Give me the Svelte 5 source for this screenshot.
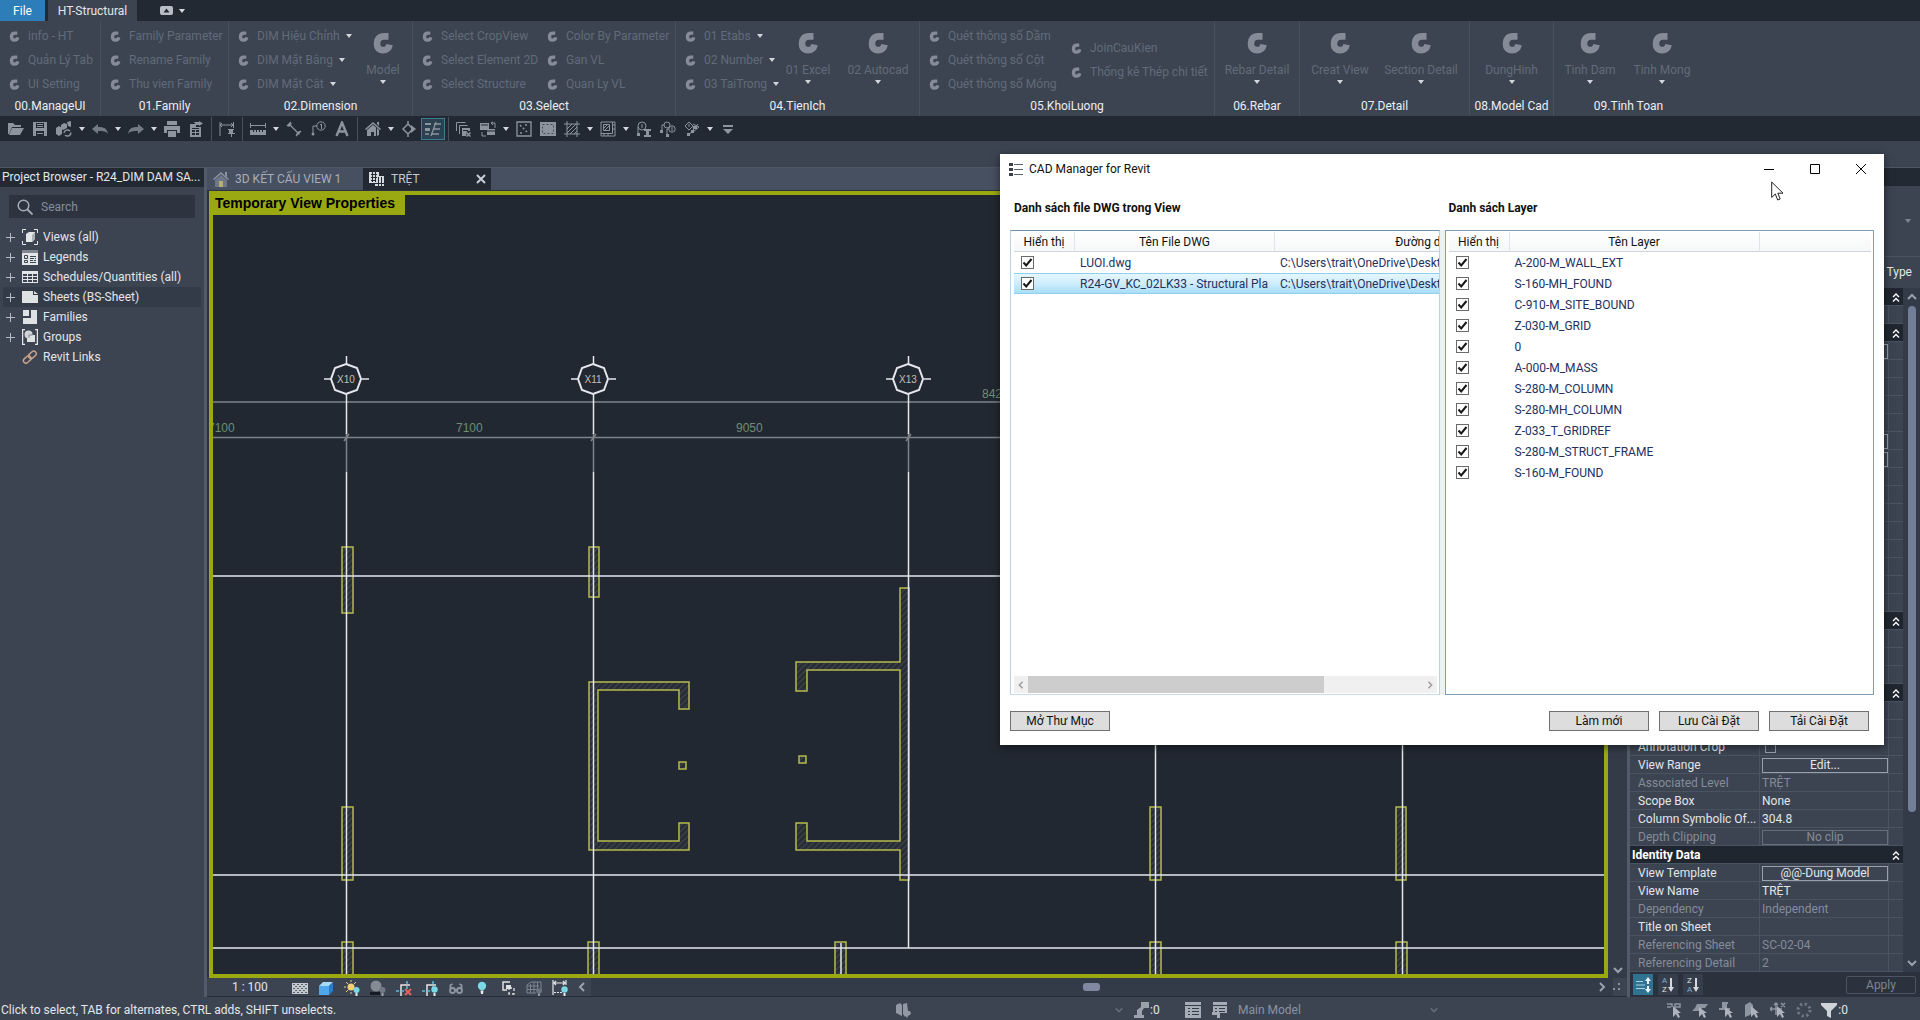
<script lang="ts">
  type Item = { label: string; menu?: boolean };
  type Column = { width: number; items: Item[] };
  type Panel = { title: string; width: number; columns?: Column[]; big?: { label: string; width: number }[] };

  const panels: Panel[] = [
    { title: '00.ManageUI', width: 101, columns: [
      { width: 100, items: [{ label: 'info - HT' }, { label: 'Quản Lý Tab' }, { label: 'UI Setting' }] },
    ] },
    { title: '01.Family', width: 128, columns: [
      { width: 127, items: [{ label: 'Family Parameter' }, { label: 'Rename Family' }, { label: 'Thu vien Family' }] },
    ] },
    { title: '02.Dimension', width: 184, columns: [
      { width: 128, items: [{ label: 'DIM Hiệu Chỉnh', menu: true }, { label: 'DIM Mặt Bằng', menu: true }, { label: 'DIM Mặt Cắt', menu: true }] },
    ], big: [{ label: 'Model', width: 52 }] },
    { title: '03.Select', width: 263, columns: [
      { width: 125, items: [{ label: 'Select CropView' }, { label: 'Select Element 2D' }, { label: 'Select Structure' }] },
      { width: 137, items: [{ label: 'Color By Parameter' }, { label: 'Gan VL' }, { label: 'Quan Ly VL' }] },
    ] },
    { title: '04.TienIch', width: 244, columns: [
      { width: 97, items: [{ label: '01 Etabs', menu: true }, { label: '02 Number', menu: true }, { label: '03 TaiTrong', menu: true }] },
    ], big: [{ label: '01 Excel', width: 70 }, { label: '02 Autocad', width: 70 }] },
    { title: '05.KhoiLuong', width: 295, columns: [
      { width: 142, items: [{ label: 'Quét thông số Dầm' }, { label: 'Quét thông số Cột' }, { label: 'Quét thông số Móng' }] },
      { width: 152, items: [{ label: 'JoinCauKien' }, { label: 'Thống kê Thép chi tiết' }] },
    ] },
    { title: '06.Rebar', width: 85, big: [{ label: 'Rebar Detail', width: 84 }] },
    { title: '07.Detail', width: 170, big: [{ label: 'Creat View', width: 80 }, { label: 'Section Detail', width: 82 }] },
    { title: '08.Model Cad', width: 84, big: [{ label: 'DungHinh', width: 83 }] },
    { title: '09.Tinh Toan', width: 149, big: [{ label: 'Tinh Dam', width: 72 }, { label: 'Tinh Mong', width: 72 }] },
  ];

  // '|' is a separator, 'v' a drop-down arrow, anything else an icon
  const quickTools = [
    'open', 'save', 'sync', 'v', 'undo', 'v', 'redo', 'v', 'print', 'exportDoc', '|', 'alignDim', '|',
    'ruler', 'v', 'measure', 'tag', 'letter', '|', 'home', 'v', 'section', 'thin', '|', 'closeWin',
    'switchWin', 'v', 'dashBox', 'fillBox', 'hatchBox', 'v', 'region', 'v', 'tagI', 'tagMulti', 'tagAll', 'v', 'customize',
  ];

  const icons: Record<string, string> = {
    open: '<path fill="currentColor" d="M0 13V2h5l2 2h6v2H4L1 13zM4 7h12l-4 7H1z"/>',
    save: '<path fill="currentColor" fill-rule="evenodd" d="M1 1h14v14H1zM4 2v5h8V2zM4 10v5h8v-5z"/><path fill="currentColor" d="M5 3h6v1H5zM5 5h6v1H5zM5 12h6v1H5z"/>',
    sync: '<path fill="currentColor" d="M0 7l3-2 3 2v6l-3 2-3-2zM5 4l3-2 3 1v4l-4 2-2-2zM11 1l4-1v6l-3-1z"/><path fill="none" stroke="currentColor" stroke-width="1.500" d="M8 12a3.500 3.500 0 0 1 6-2M15 11.500a3.500 3.500 0 0 1-6 2.500"/>',
    undo: '<path fill="#727a86" d="M0 8l6-5v3c6 0 9 1 10 7-2-3-5-3-10-3v3z"/>',
    redo: '<path fill="#727a86" d="M16 8l-6-5v3C4 6 1 7 0 13c2-3 5-3 10-3v3z"/>',
    print: '<path fill="currentColor" d="M3 0h10v4H3zM0 5h16v7h-3v-3H3v3H0zM4 10h8v6H4z"/>',
    exportDoc: '<path fill="currentColor" fill-rule="evenodd" d="M2 3h6v3h5v10H2zM4 7v1h7V7zM4 9v2h3V9zM8 9v2h3V9zM4 12v2h3v-2zM8 12v2h3v-2z"/><path fill="currentColor" d="M6 1h5V0l4 2.500-4 2.500V4H8z"/>',
    alignDim: '<path fill="none" stroke="currentColor" d="M1 1v14M14.500 1v6M1 4h13M3 2L1 4l2 2M12 2l2 2-2 2"/><path fill="currentColor" d="M9 8h6v1h-1v3h2v1h-3v3h-1v-3H9v-1h1V9H9z"/>',
    ruler: '<path fill="none" stroke="currentColor" d="M.5 2v5M15.500 2v5M1 4.500h14"/><path fill="currentColor" d="M0 9h16v5H0z"/><path stroke="#222933" d="M3.500 9v2M6.500 9v2M9.500 9v2M12.500 9v2"/>',
    measure: '<path fill="none" stroke="currentColor" stroke-width="1.200" d="M1 5l4-4M10 15l5-5M3 3l10 10M3 6V3h3M10 13h3v-3"/>',
    tag: '<circle cx="11" cy="5" r="4.200" fill="none" stroke="currentColor"/><path fill="none" stroke="currentColor" d="M10 4l1.500-1v5M7 5H3v7"/><circle cx="3" cy="13" r="1.500" fill="currentColor"/>',
    letter: '<path fill="none" stroke="currentColor" stroke-width="2.400" d="M2.500 15L8 1.500 13.500 15M4.500 10.500h7"/>',
    home: '<path fill="currentColor" d="M8 1l8 7-1 1-7-6-7 6-1-1zM12 1h2v4l-2-2zM2 9l6-5 3 2.500V15H9v-4H6v4H2zM12 7l2 2v5l-2 1z"/>',
    section: '<path fill="none" stroke="currentColor" stroke-width="1.500" d="M7 3l5 5-5 5-5-5zM7 0v3M7 13v3"/><path fill="currentColor" d="M10 4l5 4-5 4z"/>',
    thin: '<path fill="none" stroke="currentColor" stroke-width="1.300" d="M0 3h6M0 8h5M0 13h4M6 15l5-14M9 3h7M8 8h7M7 13h7"/><path fill="currentColor" d="M0 2h6v2H0zM0 7h5v3H0z"/>',
    closeWin: '<path fill="none" stroke="currentColor" d="M.5 10V1.500h9M3.500 13V4.500h8"/><path fill="currentColor" fill-rule="evenodd" d="M6 7h8v3h-3l-1 5H6zM7 9v1h5V9z"/><path fill="none" stroke="currentColor" stroke-width="1.500" d="M10.500 11.500l4 4M14.500 11.500l-4 4"/>',
    switchWin: '<path fill="currentColor" d="M0 2h9v7H0zM7 8h8v6H7z"/><path stroke="#222933" d="M1 4h7M7 10h8"/><path fill="none" stroke="currentColor" d="M11 2h4v5M2 11v4h4M13 1l-2 1 2 2"/>',
    dashBox: '<path fill="none" stroke="currentColor" stroke-width="1.300" d="M1 1h14v14H1z"/><path stroke="currentColor" stroke-width="1.500" stroke-dasharray="2 2" d="M4 4l8 8M9 4h3M4 12h4"/>',
    fillBox: '<path fill="currentColor" d="M0 1h16v14H0z"/><path fill="none" stroke="#444d5a" stroke-dasharray="2 2" d="M2.500 3.500h11v9h-11z"/>',
    hatchBox: '<path fill="none" stroke="currentColor" d="M3 0v16M13 0v16M0 3h16M0 13h16M3 8l5-5M3 12l9-9M6 13l7-7M10 13l3-3"/>',
    region: '<path fill="none" stroke="currentColor" d="M1 1h14v14H1zM3.500 3.500h6v6h-6zM3 8l5-5M5 9l5-5M1 12.500h11.500V1M4 12v3M8 12v3M12 4h3M12 8h3"/>',
    tagI: '<circle cx="6" cy="5" r="4" fill="none" stroke="currentColor"/><path fill="none" stroke="currentColor" d="M6 3v4M2 6v8"/><path fill="currentColor" d="M8 8h7v2h-2v4h2v2H8v-2h2v-4H8zM1 12h3v3H1z"/>',
    tagMulti: '<circle cx="7" cy="4" r="3" fill="none" stroke="currentColor"/><circle cx="12" cy="8" r="3.200" fill="none" stroke="currentColor"/><path fill="none" stroke="currentColor" d="M4 4H2v7M9 8H7v6M12 6v4"/><path fill="currentColor" d="M0 9h3v3H0zM6 13h3v3H6z"/>',
    tagAll: '<path fill="none" stroke="currentColor" d="M5 1l4 4-4 4-4-4zM5 3v3M9 3l6 3-6 5M14 3L4 15"/><path fill="currentColor" d="M7 9h3v3H7zM3 12h3v3H3zM9 5h4v3H9z"/>',
    customize: '<path fill="currentColor" d="M3 4h10v2H3zM3 8h10l-5 5z"/>',
    views: '<path fill="none" stroke="#e3e6e6" d="M4 .5H.5V4M12 .5h3.500V4M4 15.500H.5V12M12 15.500h3.500V12"/><path fill="#e3e6e6" d="M4 5l3-2h6v7l-3 3H4z"/><path fill="#aab1b8" d="M10 6l3-3v7l-3 3z"/>',
    legends: '<path fill="#e3e6e6" d="M0 4h16v12H0z"/><path fill="#7f868f" d="M0 1h16v3H0z"/><path fill="none" stroke="#3c4452" d="M2.500 6.500h3v3h-3zM2.500 11.500h3v2h-3zM8 7.500h6M8 9.500h4M13 9.500h1M8 11.500h3M12 11.500h2M8 13.500h6"/>',
    schedules: '<path fill="#e3e6e6" d="M0 2h16v12H0z"/><path fill="#3c4452" d="M1 5h4v2H1zM6 5h4v2H6zM11 5h4v2h-4zM1 8h4v2H1zM6 8h4v2H6zM11 8h4v2h-4zM1 11h4v2H1zM6 11h4v2H6zM11 11h4v2h-4z"/>',
    sheets: '<path fill="#dfe2e2" d="M0 2h11v4h5v8H0z"/><path fill="#dfe2e2" d="M12 2l4 3h-4z"/>',
    families: '<path fill="#dfe2e2" d="M1 1h6v6H1zM9 1h6v14H1V9h8z"/>',
    groups: '<path fill="none" stroke="#e3e6e6" stroke-width="1.300" d="M3 .6H.6v14.800H3M13 .6h2.400v14.800H13"/><circle cx="6.500" cy="5.500" r="4" fill="#cfd4d8"/><path fill="#dfe2e2" d="M7 6h6v7H5V9.500z"/><path fill="none" stroke="#7f868f" d="M7 6h3.500M7 6v3"/>',
    links: '<g fill="none" stroke="#c9a48c" stroke-width="1.500" transform="rotate(-42 8 8)"><rect x="0" y="5.500" width="8.500" height="5" rx="2.500"/><rect x="7" y="5.500" width="8.500" height="5" rx="2.500"/></g>',
    house3d: '<path fill="#8b93a0" d="M8 1l8 7-1 1-7-6-7 6-1-1zM12 1h2v5l-2-2z"/><path fill="#6c7788" d="M2 9l6-5 6 5v7H2z"/><path fill="#b9ae71" d="M6 10h4v6H6z"/>',
    plan: '<path fill="#d5dade" d="M0 1h10v4h5v10H6v-3H0z"/><path stroke="#222933" d="M2 3.500h6M2 6.500h6M2 9.500h4M3.500 1v10M6.500 1v10M9.500 6v9M12.500 6v9M6 12.500h9"/>',
    grain: '<path fill="#c5cad0" d="M0 3h16v11H0z"/><path stroke="#59616d" stroke-dasharray="2 2" d="M1 4.500h14M1 8.500h14M1 12.500h14"/><path stroke="#59616d" stroke-dasharray="2 2" d="M3 6.500h12M3 10.500h12"/>',
    cube: '<path fill="#a9d9fa" d="M1 6l4-4h10l-4 4z"/><path fill="#4fa6ea" d="M1 6h10v9H1z"/><path fill="#2b7cc4" d="M11 6l4-4v9l-4 4z"/>',
    sun: '<circle cx="7" cy="7" r="3.500" fill="#f3cf7a"/><path stroke="#f3cf7a" d="M7 0v2M7 12v2M0 7h2M2 2l2 2M10 4l2-2M2 12l2-2"/><circle cx="12.500" cy="10" r="3" fill="#79d8e4"/><path fill="#e8ecef" d="M11.500 13h2v3h-2z"/>',
    shadow: '<circle cx="6" cy="6" r="5.500" fill="#858b94"/><path fill="#171c24" d="M0 12h10v3H0z"/><circle cx="12.500" cy="10" r="3" fill="#717985"/><path fill="#a0a6ae" d="M11.500 13h2v3h-2z"/>',
    cropOff: '<path fill="none" stroke="#e3e6e6" stroke-width="1.500" d="M5 16V5h9"/><path fill="none" stroke="#5bb9dd" stroke-width="1.500" stroke-dasharray="3 2" d="M0 11h11M11 1v9"/><path stroke="#e3605e" stroke-width="2" d="M9 9l6 6M15 9l-6 6"/>',
    cropOn: '<path fill="none" stroke="#e3e6e6" stroke-width="1.500" d="M5 16V5h9"/><path fill="none" stroke="#5bb9dd" stroke-width="1.500" stroke-dasharray="3 2" d="M0 11h11M11 1v9"/><circle cx="12.500" cy="9.500" r="3.200" fill="#79d8e4"/><path fill="#e8ecef" d="M11.500 13h2v3h-2z"/>',
    glasses: '<g fill="none" stroke="#8e96a2" stroke-width="1.800"><circle cx="4.500" cy="10.500" r="2.500"/><circle cx="11.500" cy="10.500" r="2.500"/><path d="M2.500 9V5l2-1M13.500 9V5l-2-1M7 10h2"/></g>',
    bulb: '<circle cx="8" cy="6" r="4.200" fill="#79d8e4"/><path fill="#e8ecef" d="M6.500 10.500h3L9 14H7z"/>',
    reveal: '<path fill="none" stroke="#dfe2e2" stroke-width="1.500" d="M10 2H3v8h4"/><path fill="#dfe2e2" d="M6 5h5v4H6z"/><path fill="none" stroke="#dfe2e2" stroke-width="1.300" stroke-dasharray="3 2" d="M9 8h5v6H9z"/>',
    mesh: '<path fill="none" stroke="#7d8591" d="M1 13V5l4-3h10v10M1 6h12M1 9.500h12M1 13h9M4.500 4v9M8 2v11M11.500 2v8"/><circle cx="13" cy="11" r="2.800" fill="#6b7481"/><path fill="#959ca6" d="M12 13.500h2V16h-2z"/>',
    constraint: '<path fill="none" stroke="#e3e6e6" stroke-width="1.200" d="M1 0v15M14 0v5M2 3h11M4 1L2 3l2 2M11 1l2 2-2 2"/><path stroke="#e3e6e6" stroke-dasharray="2 1" d="M2 12.500h8"/><circle cx="12.500" cy="9.500" r="3.200" fill="#79d8e4"/><path fill="#e8ecef" d="M11.500 13h2v3h-2z"/>',
    workset: '<path fill="#9299a4" d="M1 3l4-2 2 2v11l-4-2-2-1zM8 2l4-1 1 8-3 6-2-3zM10 9h5l1 3-3 2-1 2-2-3z"/>',
    lamp: '<path fill="#9aa1ab" d="M8 0h8v6h-5l-2 3v4h2v3H1v-3h3V8l4-3z"/>',
    list: '<path fill="#a5acb5" d="M0 0h16v16H0z"/><path stroke="#343c48" d="M0 3.500h16M3 6.500h2M7 6.500h7M3 9.500h2M7 9.500h7M3 12.500h2M7 12.500h7"/>',
    listArrow: '<path fill="#a5acb5" d="M2 0h14v11H9v5H6v-3H1v-3h1z"/><path stroke="#343c48" d="M2 3.500h14M4 6.500h2M8 6.500h6M4 9.500h2M8 9.500h6"/>',
    selLink: '<path fill="none" stroke="#8d95a1" stroke-width="1.500" d="M1 5h4M1 2h5v3M9 2h5v3H9z"/><path fill="#aeb4bd" d="M7 4v11l3-3 2 4 2-1-2-4h3z"/>',
    selUnder: '<path fill="#8d95a1" d="M5 2h11l-3 4H3zM3 6h7l-2 3H0z"/><path fill="#aeb4bd" d="M7 5v10l3-3 2 4 2-1-2-4h3z"/>',
    selPin: '<path fill="#8d95a1" d="M4 0h6v2H9v4h3v2H1V6h3V2z"/><path fill="#aeb4bd" d="M7 5v10l3-3 2 4 2-1-2-4h3z"/>',
    selFace: '<path fill="#8d95a1" d="M1 3l5-3v13l-5 2zM6 0l3 3v5l-3 5z"/><path fill="#aeb4bd" d="M7 4v11l3-3 2 4 2-1-2-4h3z"/>',
    drag: '<path fill="none" stroke="#8d95a1" stroke-width="1.500" d="M6 1v12M0 7h12M2 5L0 7l2 2M4 3l2-2 2 2M11 1l4 4M15 1l-4 4"/><path fill="#aeb4bd" d="M7 4v11l3-3 2 4 2-1-2-4h3z"/>',
    spin: '<circle cx="8" cy="8" r="6" fill="none" stroke="#6f7784" stroke-width="3" stroke-dasharray="2.200 2.500"/>',
    filter: '<path fill="#cfd3d8" d="M0 1h16v2l-6 6v7l-4-2V9L0 3z"/>',
  };

  const tree = [
    { icon: 'views', label: 'Views (all)', plus: true },
    { icon: 'legends', label: 'Legends', plus: true },
    { icon: 'schedules', label: 'Schedules/Quantities (all)', plus: true },
    { icon: 'sheets', label: 'Sheets (BS-Sheet)', plus: true },
    { icon: 'families', label: 'Families', plus: true },
    { icon: 'groups', label: 'Groups', plus: true },
    { icon: 'links', label: 'Revit Links', plus: false },
  ];
  let picked = $state('Sheets (BS-Sheet)');

  const viewTools = ['grain', 'cube', 'sun', 'shadow', 'cropOff', 'cropOn', 'glasses', 'bulb', 'reveal', 'mesh', 'constraint'];
  const selectTools = ['selLink', 'selUnder', 'selPin', 'selFace', 'drag', 'spin'];

  let files = $state([
    { on: true, name: 'LUOI.dwg', path: 'C:\\Users\\trait\\OneDrive\\Desktop' },
    { on: true, name: 'R24-GV_KC_02LK33 - Structural Plan', path: 'C:\\Users\\trait\\OneDrive\\Desktop' },
  ]);
  let current = $state(1);

  let layers = $state(
    ['A-200-M_WALL_EXT', 'S-160-MH_FOUND', 'C-910-M_SITE_BOUND', 'Z-030-M_GRID', '0', 'A-000-M_MASS',
      'S-280-M_COLUMN', 'S-280-MH_COLUMN', 'Z-033_T_GRIDREF', 'S-280-M_STRUCT_FRAME', 'S-160-M_FOUND']
      .map((name) => ({ name, on: true }))
  );

  type Prop = { head?: boolean; name?: string; value?: string; kind?: 'button' | 'check'; off?: boolean };
  const blank = (n: number): Prop[] => Array.from({ length: n }, () => ({}));
  const props: Prop[] = [
    { head: true }, ...blank(1),
    { head: true }, { kind: 'button' }, ...blank(4), { kind: 'button' }, { kind: 'button' }, ...blank(8),
    { head: true }, ...blank(3),
    { head: true }, ...blank(2),
    { name: 'Annotation Crop', kind: 'check' },
    { name: 'View Range', value: 'Edit...', kind: 'button' },
    { name: 'Associated Level', value: 'TRỆT', off: true },
    { name: 'Scope Box', value: 'None' },
    { name: 'Column Symbolic Of...', value: '304.8' },
    { name: 'Depth Clipping', value: 'No clip', kind: 'button', off: true },
    { head: true, name: 'Identity Data' },
    { name: 'View Template', value: '@@-Dung Model', kind: 'button' },
    { name: 'View Name', value: 'TRỆT' },
    { name: 'Dependency', value: 'Independent', off: true },
    { name: 'Title on Sheet', value: '' },
    { name: 'Referencing Sheet', value: 'SC-02-04', off: true },
    { name: 'Referencing Detail', value: '2', off: true },
  ];

  const bubbles = [{ x: 346, t: 'X10' }, { x: 593, t: 'X11' }, { x: 908, t: 'X13' }];
  const columns = [
    [342, 547, 11, 66], [589, 547, 10, 50], [342, 807, 11, 73], [1150, 807, 11, 73], [1396, 807, 10, 73],
    [342, 942, 11, 40], [588, 942, 11, 40], [835, 942, 11, 40], [1150, 942, 11, 40], [1396, 942, 11, 40],
  ];
</script>

{#snippet icon(name: string)}
  <svg class="icon" width="16" height="16" viewBox="0 0 16 16" aria-hidden="true">{@html icons[name]}</svg>
{/snippet}

{#snippet logo(size: number)}
  <svg class="logo" width={size} height={size} viewBox="0 0 20 20" aria-hidden="true">
    <path fill="none" stroke="currentColor" stroke-width="6" d="M15 4h-4C6.500 4 4.500 6.500 4.500 10.500 4.500 14.500 6.500 16.500 10 16.500c4 0 5.500-2.500 6-5" />
  </svg>
{/snippet}

{#snippet collapse()}
  <svg class="collapse" width="8" height="10" viewBox="0 0 8 10" aria-hidden="true">
    <path fill="none" stroke="#fff" stroke-width="1.400" d="M1 4l3-3 3 3M1 8.500l3-3 3 3" />
  </svg>
{/snippet}

{#snippet chevron(dir: string)}
  <svg class="chev {dir}" width="10" height="10" viewBox="0 0 10 10" aria-hidden="true">
    <path fill="none" stroke="currentColor" stroke-width="2" d="M1 3l4 4 4-4" />
  </svg>
{/snippet}

<div class="app">
  <nav class="tabs">
    <button class="tab-file">File</button>
    <button class="tab-ribbon">HT-Structural</button>
    <button class="tab-toggle" aria-label="Ribbon display">
      <svg width="13" height="9" viewBox="0 0 13 9"><rect width="13" height="9" rx="2" fill="#b9bec6" /><path fill="#222933" d="M3.500 6.500l3-4 3 4z" /></svg>
      <span class="caret"></span>
    </button>
  </nav>

  <div class="ribbon">
    {#each panels as p}
      <section class="panel" style="width: {p.width}px">
        <div class="panel-body">
          {#each p.columns ?? [] as col}
            <div class="panel-col" style="width: {col.width}px">
              {#each col.items as it}
                <button class="small">
                  {@render logo(11)}<span>{it.label}</span>
                  {#if it.menu}<span class="caret"></span>{/if}
                </button>
              {/each}
            </div>
          {/each}
          {#each p.big ?? [] as b}
            <button class="big" style="width: {b.width}px">
              {@render logo(22)}<span>{b.label}</span><span class="caret"></span>
            </button>
          {/each}
        </div>
        <div class="panel-title">{p.title}</div>
      </section>
    {/each}
  </div>

  <div class="quick">
    {#each quickTools as t}
      {#if t === '|'}
        <span class="quick-sep"></span>
      {:else if t === 'v'}
        <button class="quick-menu" aria-label="More"><span class="caret"></span></button>
      {:else}
        <button class="quick-btn" class:on={t === 'thin'} aria-label={t}>{@render icon(t)}</button>
      {/if}
    {/each}
  </div>

  <div class="options"></div>

  <div class="main">
    <aside class="browser">
      <h2 class="browser-head">Project Browser - R24_DIM DAM SA...</h2>
      <div class="search">
        <svg width="16" height="16" viewBox="0 0 16 16" aria-hidden="true"><circle cx="6.500" cy="6.500" r="5.300" fill="none" stroke="#a6adb8" stroke-width="1.500" /><path stroke="#a6adb8" stroke-width="1.800" d="M10.500 10.500l5 5" /></svg>
        <input type="text" placeholder="Search" aria-label="Search" />
      </div>
      <ul class="tree">
        {#each tree as n}
          <li>
            <button class="node" class:picked={picked === n.label} onclick={() => (picked = n.label)}>
              <span class="plus" class:shown={n.plus}></span>
              {@render icon(n.icon)}
              <span>{n.label}</span>
            </button>
          </li>
        {/each}
      </ul>
    </aside>

    <div class="center">
      <div class="view-tabs">
        <button class="view-tab">{@render icon('house3d')}<span>3D KẾT CẤU VIEW 1</span></button>
        <button class="view-tab active">
          {@render icon('plan')}<span>TRỆT</span>
          <svg class="x" width="10" height="10" viewBox="0 0 10 10"><path stroke="#c9ced6" stroke-width="2" d="M1 1l8 8M9 1L1 9" /></svg>
        </button>
      </div>
      <div class="view-row">
        <div class="view">
          <div class="temp-label">Temporary View Properties</div>
          <svg class="drawing" width="100%" height="100%">
            <defs>
              <pattern id="hatch" width="6" height="6" patternUnits="userSpaceOnUse">
                <rect width="6" height="6" fill="#272c35" />
                <path stroke="#3a4048" stroke-width="1.500" d="M-1 7L7-1M-1 1l2-2M5 7l2-2" />
              </pattern>
            </defs>
            <g transform="translate(-213 -195)">
              <g fill="url(#hatch)" stroke="#b5ba4c" stroke-width="1.500">
                {#each columns as [x, y, w, h]}<rect {x} {y} width={w} height={h} />{/each}
                <path d="M589 682H689V709H679V690H598V841H679V823H689V850H589Z" />
                <path d="M900 588H909V880H900V850H796V823H807V841H900V670H807V691H796V662H900Z" />
                <rect x="679" y="762" width="7" height="7" />
                <rect x="799" y="756" width="7" height="7" />
              </g>
              <g fill="none" stroke="#7c828c" stroke-width="1.500">
                <path d="M213 402H1604M213 437.500H1604" />
                {#each bubbles as b}<path d="M{b.x + 0.5} 433V472M{b.x - 2} 441l5-7" />{/each}
              </g>
              <g fill="none" stroke="#e4e6ee" stroke-width="1.500">
                <path d="M213 576H1604M213 875H1604M213 948H1604" />
                <path d="M346.500 472V975M593.500 472V975M908.500 472V948M1155.500 437V975M1402.500 437V975M841 943V975" />
                {#each bubbles as b}
                  <path d="M{b.x + 0.5} 356v8M{b.x + 0.5} 394V434M{b.x - 22} 379h7M{b.x + 16} 379h7" />
                  <path stroke-width="2" d="M{b.x} 364l11 4 4 11-4 11-11 4-11-4-4-11 4-11z" />
                {/each}
              </g>
              {#each bubbles as b}<text class="grid-no" x={b.x} y="383" text-anchor="middle">{b.t}</text>{/each}
              <g class="dims">
                <text x="208" y="432">7100</text>
                <text x="456" y="432">7100</text>
                <text x="736" y="432">9050</text>
                <text x="982" y="398">8425</text>
              </g>
            </g>
          </svg>
        </div>
        <div class="view-vscroll">{@render chevron('down')}</div>
      </div>
      <div class="view-bar">
        <button class="scale">1 : 100</button>
        {#each viewTools as t}
          <button class="view-tool" aria-label={t}>{@render icon(t)}</button>
        {/each}
        <span class="view-more">{@render chevron('left')}</span>
        <div class="view-hscroll"><span class="hthumb"></span></div>
        <span class="view-end">{@render chevron('right')}</span>
        <svg class="grip" width="8" height="8" viewBox="0 0 8 8"><path fill="#8a92a0" d="M5 0h2v2H5zM5 5h2v2H5zM0 5h2v2H0z" /></svg>
      </div>
    </div>

    <aside class="props">
      <div class="props-head"></div>
      <div class="props-type"><span class="caret"></span></div>
      <button class="edit-type">Edit Type</button>
      <div class="props-scroll">
        <table class="props-table">
          <colgroup><col class="c-name" /><col class="c-val" /><col class="c-end" /></colgroup>
          <tbody>
            {#each props as p}
              {#if p.head}
                <tr class="head"><th>{p.name ?? ''}</th><td></td><td>{@render collapse()}</td></tr>
              {:else}
                <tr class:off={p.off}>
                  <td class="name">{p.name ?? ''}</td>
                  <td class="val">
                    {#if p.kind === 'button'}
                      <button disabled={p.off}>{p.value ?? ''}</button>
                    {:else if p.kind === 'check'}
                      <input type="checkbox" aria-label={p.name} />
                    {:else}
                      {p.value ?? ''}
                    {/if}
                  </td>
                  <td></td>
                </tr>
              {/if}
            {/each}
          </tbody>
        </table>
        <div class="props-vscroll">{@render chevron('up')}<span class="vthumb"></span>{@render chevron('down')}</div>
      </div>
      <div class="props-foot">
        <button class="sort on" aria-label="Group">
          <svg width="16" height="16" viewBox="0 0 16 16"><path stroke="#a9d5e6" d="M1 4.500h7M1 8h9M1 11.500h9" /><path fill="#e6f3f8" d="M13 0l3 4h-2v3h-2V4h-2zM13 16l-3-4h2V9h2v3h2z" /></svg>
        </button>
        <button class="sort" aria-label="A to Z"><span class="az"><i>A</i><b>Z</b></span><svg width="7" height="14" viewBox="0 0 7 14"><path fill="#d5d9df" d="M3 0h2v9h2l-3 5-3-5h2z" /></svg></button>
        <button class="sort" aria-label="Z to A"><span class="az"><b>Z</b><i>A</i></span><svg width="7" height="14" viewBox="0 0 7 14"><path fill="#d5d9df" d="M3 0h2v9h2l-3 5-3-5h2z" /></svg></button>
        <button class="apply" disabled>Apply</button>
      </div>
    </aside>
  </div>

  <footer class="status">
    <span class="hint">Click to select, TAB for alternates, CTRL adds, SHIFT unselects.</span>
    {@render icon('workset')}
    <span class="combo">{@render chevron('down')}</span>
    {@render icon('lamp')}<span class="count">:0</span>
    <span class="pair">{@render icon('list')}{@render icon('listArrow')}</span>
    <label class="model">
      <select aria-label="Design option"><option>Main Model</option></select>
      {@render chevron('down')}
    </label>
    <span class="sel-tools">
      {#each selectTools as t}
        <button aria-label={t}>{@render icon(t)}</button>
      {/each}
    </span>
    {@render icon('filter')}<span class="count last">:0</span>
  </footer>

  <div class="dialog" role="dialog" aria-label="CAD Manager for Revit">
    <header class="dlg-title">
      <svg width="14" height="13" viewBox="0 0 14 13" aria-hidden="true"><path fill="#3a3f4a" d="M0 0h4v3H0zM0 5h4v3H0zM0 10h4v3H0z" /><path stroke="#5a606c" stroke-width="1.200" d="M5 1.500h9M5 6.500h9M5 11.500h9" /></svg>
      <span>CAD Manager for Revit</span>
      <span class="win-btns">
        <button aria-label="Minimize"><svg width="10" height="10"><path stroke="#000" d="M0 5.500h10" /></svg></button>
        <button aria-label="Maximize"><svg width="10" height="10"><path fill="none" stroke="#000" d="M.5.5h9v9h-9z" /></svg></button>
        <button aria-label="Close"><svg width="10" height="10"><path stroke="#000" d="M0 0l10 10M10 0L0 10" /></svg></button>
      </span>
    </header>
    <div class="dlg-body">
      <div class="pane">
        <h3>Danh sách file DWG trong View</h3>
        <div class="list files">
          <table>
            <colgroup><col class="w-on" /><col class="w-file" /><col class="w-path" /></colgroup>
            <thead><tr><th>Hiển thị</th><th>Tên File DWG</th><th>Đường dẫn</th></tr></thead>
            <tbody>
              {#each files as f, i}
                <tr class:current={current === i} onclick={() => (current = i)}>
                  <td><input type="checkbox" bind:checked={f.on} aria-label={f.name} /></td>
                  <td><span class="clip">{f.name}</span></td>
                  <td>{f.path}</td>
                </tr>
              {/each}
            </tbody>
          </table>
          <div class="hbar">{@render chevron('left')}<span class="track"><span class="thumb"></span></span>{@render chevron('right')}</div>
        </div>
      </div>
      <div class="splitter"></div>
      <div class="pane">
        <h3>Danh sách Layer</h3>
        <div class="list layers">
          <table>
            <colgroup><col class="w-on" /><col class="w-layer" /><col /></colgroup>
            <thead><tr><th>Hiển thị</th><th>Tên Layer</th><th></th></tr></thead>
            <tbody>
              {#each layers as l}
                <tr>
                  <td><input type="checkbox" bind:checked={l.on} aria-label={l.name} /></td>
                  <td>{l.name}</td>
                  <td></td>
                </tr>
              {/each}
            </tbody>
          </table>
        </div>
      </div>
    </div>
    <div class="dlg-foot">
      <button>Mở Thư Mục</button>
      <span class="grow"></span>
      <button>Làm mới</button>
      <button>Lưu Cài Đặt</button>
      <button>Tải Cài Đặt</button>
    </div>
    <svg class="pointer" width="13" height="20" viewBox="0 0 13 20" aria-hidden="true">
      <path fill="#fff" stroke="#222" d="M.7 1v15.500l3.600-3.500 2.400 6 2.500-1-2.400-5.800H12z" />
    </svg>
  </div>
</div>

<style>
  :global(body) { margin: 0; background: #222933; }

  .app {
    position: relative;
    display: flex;
    flex-direction: column;
    height: 100vh;
    overflow: hidden;
    background: #3c4452;
    color: #e3e6ea;
    font-family: Roboto, "Noto Sans", sans-serif;
    font-size: 12px;
    line-height: 16px;
  }

  button, input, select { font: inherit; color: inherit; }
  button {
    margin: 0;
    padding: 0;
    border: 0;
    background: none;
    white-space: nowrap;
  }
  svg { flex-shrink: 0; display: block; }
  h2, h3, ul { margin: 0; padding: 0; font-size: 12px; }

  .caret {
    border: 3px solid transparent;
    border-top: 4px solid #d3d7dd;
    border-bottom: 0;
    width: 0;
    height: 0;
  }

  .chev { color: #9aa2af; }
  .chev.left { transform: rotate(90deg); }
  .chev.right { transform: rotate(-90deg); }
  .chev.up { transform: rotate(180deg); }

  /* ── Ribbon ── */
  .tabs {
    display: flex;
    flex-shrink: 0;
    height: 21px;
    background: #222933;
  }
  .tab-file { width: 45px; margin-right: 3px; background: #2d7db8; color: #fff; }
  .tab-ribbon { width: 89px; background: #3c4452; }
  .tab-toggle { display: flex; align-items: center; gap: 6px; margin-left: 23px; }

  .ribbon {
    display: flex;
    flex-shrink: 0;
    height: 95px;
    color: #626b78;
  }
  .panel {
    display: flex;
    flex-direction: column;
    flex-shrink: 0;
    box-sizing: border-box;
    border-right: 1px solid #48505e;
  }
  .panel:last-child { border-right: 0; }
  .panel-body { display: flex; flex: 1; padding-top: 3px; }
  .panel-col {
    display: flex;
    flex-direction: column;
    justify-content: center;
    flex-shrink: 0;
    height: 72px;
    box-sizing: border-box;
    padding-left: 9px;
  }
  .small { display: flex; align-items: center; height: 24px; }
  .small .logo { margin-right: 8px; }
  .small .caret { margin-left: 6px; }
  .big {
    display: flex;
    flex-direction: column;
    align-items: center;
    padding-top: 8px;
  }
  .big span:not(.caret) { margin: 8px 0 2px; }
  .logo { color: #858c98; }
  .panel-title { height: 19px; line-height: 19px; text-align: center; color: #eceef1; }

  /* ── Quick access ── */
  .quick {
    display: flex;
    align-items: center;
    flex-shrink: 0;
    height: 25px;
    padding-left: 4px;
    background: #222933;
    color: #8d949e;
  }
  .quick-btn { display: flex; align-items: center; justify-content: center; width: 24px; height: 22px; box-sizing: border-box; }
  .quick-btn.on { border: 1px solid #3f7d92; background: #2b4150; }
  .quick-menu { display: flex; justify-content: center; width: 12px; }
  .quick-sep { width: 1px; height: 24px; margin: 0 3px; background: #47505d; }

  .options { flex-shrink: 0; height: 26px; }

  .main { display: flex; flex: 1; min-height: 0; border-top: 1px solid #4d5767; }

  /* ── Project browser ── */
  .browser { width: 204px; flex-shrink: 0; border-right: 3px solid #525b69; }
  .browser-head {
    height: 19px;
    padding-left: 2px;
    line-height: 19px;
    font-weight: 400;
    background: #222933;
    white-space: nowrap;
  }
  .search {
    display: flex;
    align-items: center;
    gap: 8px;
    height: 23px;
    margin: 8px 9px 9px;
    padding-left: 8px;
    background: #2d3440;
  }
  .search input { flex: 1; min-width: 0; padding: 0; border: 0; outline: 0; background: none; }
  .search input::placeholder { color: #868d99; opacity: 1; }
  .tree { list-style: none; }
  .node {
    display: flex;
    align-items: center;
    gap: 5px;
    width: 198px;
    height: 20px;
    margin-left: 3px;
    padding-left: 3px;
  }
  .node.picked { background: #343b48; }
  .plus { width: 9px; height: 9px; margin-right: 2px; }
  .plus.shown {
    background:
      linear-gradient(#b4bac3, #b4bac3) center / 9px 1px no-repeat,
      linear-gradient(#b4bac3, #b4bac3) center / 1px 9px no-repeat;
  }

  /* ── View ── */
  .center { display: flex; flex-direction: column; flex: 1; min-width: 0; background: #2d3440; }
  .view-tabs { display: flex; flex-shrink: 0; height: 22px; background: #475060; }
  .view-tab {
    display: flex;
    align-items: center;
    gap: 6px;
    width: 156px;
    padding-left: 6px;
    color: #a7aeb9;
  }
  .view-tab.active { width: 128px; background: #222933; color: #c3c8d0; }
  .view-tab .x { margin: 0 5px 0 auto; }

  .view-row { display: flex; flex: 1; min-height: 0; padding: 1px 0 0 2px; }
  .view {
    position: relative;
    flex: 1;
    min-width: 0;
    border: 4px solid #9aa912;
    background: #222831;
  }
  .temp-label {
    position: absolute;
    top: -4px;
    left: -4px;
    padding: 0 10px 0 6px;
    background: #9aa912;
    color: #000;
    font: bold 14px/24px "Liberation Sans", Arial, sans-serif;
  }
  .drawing { position: absolute; inset: 0; }
  .grid-no { fill: #c3beb4; font: 10px "Liberation Sans", sans-serif; }
  .dims { fill: #6f8c78; font: 12px "Liberation Sans", sans-serif; }
  .view-vscroll {
    display: flex;
    align-items: flex-end;
    justify-content: center;
    width: 19px;
    padding-bottom: 3px;
    background: #343b48;
  }

  .view-bar {
    display: flex;
    align-items: center;
    flex-shrink: 0;
    height: 18px;
    padding-left: 25px;
    border-bottom: 1px solid #272d38;
    background: #3c4452;
  }
  .scale { width: 55px; text-align: left; }
  .view-tool { width: 26px; padding: 1px 0 0 5px; }
  .view-more { width: 14px; padding-left: 4px; }
  .view-hscroll { display: flex; flex: 1; align-self: stretch; align-items: center; justify-content: center; background: #343b48; }
  .hthumb { width: 17px; height: 8px; border-radius: 3px; background: #7f88a0; }
  .view-end { padding: 4px 6px; background: #343b48; }
  .grip { margin-right: 6px; }

  /* ── Properties ── */
  .props {
    display: flex;
    flex-direction: column;
    width: 290px;
    flex-shrink: 0;
    border-left: 3px solid #525b69;
    background: #3c4452;
  }
  .props-head { flex-shrink: 0; height: 18px; background: #222933; }
  .props-type {
    display: flex;
    align-items: center;
    justify-content: flex-end;
    flex-shrink: 0;
    height: 70px;
    padding-right: 9px;
    border-bottom: 1px solid #4b5463;
  }
  .props-type .caret { border-top-color: #7c8491; }
  .edit-type { flex-shrink: 0; height: 31px; padding: 0 8px 2px 0; text-align: right; }
  .props-scroll { display: flex; flex: 1; min-height: 0; overflow: hidden; }
  .props-table {
    width: calc(100% - 17px);
    align-self: flex-start;
    table-layout: fixed;
    border-collapse: separate;
    border-spacing: 0;
  }
  .c-name { width: 130px; }
  .c-end { width: 14px; }
  .props-table td, .props-table th {
    box-sizing: border-box;
    height: 18px;
    padding: 2px 0 0;
    border-bottom: 1px solid #4a5362;
    line-height: 15px;
    white-space: nowrap;
    overflow: hidden;
  }
  .props-table td { border-right: 1px solid #4a5362; }
  .props-table td:last-child { border-right: 0; }
  .props-table .name { padding-left: 8px; }
  .props-table .val { padding-left: 2px; }
  .props-table th { padding-left: 2px; text-align: left; color: #fff; }
  .props-table .head th, .props-table .head td { background: #20262f; border-right: 0; }
  .collapse { margin: 0 auto; }
  .off { color: #848c98; }
  .val button {
    display: block;
    box-sizing: border-box;
    width: 126px;
    height: 15px;
    line-height: 13px;
    border: 1px solid #99a0ab;
  }
  .off .val button { border-color: #666f7c; }
  .val input {
    display: block;
    appearance: none;
    width: 11px;
    height: 11px;
    margin: 0 3px;
    border: 1px solid #99a0ab;
  }
  .props-vscroll {
    display: flex;
    flex-direction: column;
    align-items: center;
    gap: 4px;
    width: 17px;
    padding: 4px 0;
    background: #343b48;
  }
  .vthumb { width: 8px; height: 506px; border-radius: 4px; background: #727d97; }
  .props-vscroll .down { margin-top: auto; }
  .props-foot {
    display: flex;
    align-items: center;
    gap: 5px;
    flex-shrink: 0;
    height: 25px;
    padding: 0 4px 0 3px;
    background: #2b313d;
  }
  .sort { display: flex; align-items: center; justify-content: center; width: 20px; height: 21px; background: #363e4b; }
  .sort.on { background: #2f7390; }
  .az { display: flex; flex-direction: column; font-size: 8px; line-height: 9px; }
  .az i { font-style: normal; color: #7fb0d8; }
  .az b { font-weight: 400; }
  .apply {
    width: 70px;
    height: 18px;
    margin-left: auto;
    border: 1px solid #4b5463;
    border-radius: 2px;
    color: #7d8592;
  }

  /* ── Status bar ── */
  .status { display: flex; align-items: center; flex-shrink: 0; box-sizing: border-box; height: 23px; padding-top: 3px; }
  .hint { width: 894px; flex-shrink: 1; padding-left: 1px; white-space: nowrap; }
  .combo { display: flex; justify-content: flex-end; width: 212px; margin-right: 10px; }
  .status .chev { width: 8px; color: #626b78; }
  .count { width: 35px; padding-left: 1px; }
  .count.last { width: auto; padding-right: 72px; }
  .pair { display: flex; gap: 10px; }
  .model { display: flex; align-items: center; width: 200px; margin-left: 11px; color: #8b929e; }
  .model select { flex: 1; padding: 0; border: 0; outline: 0; appearance: none; background: none; }
  .sel-tools { display: flex; gap: 10px; margin: 0 9px 0 auto; }

  /* ── CAD Manager window ── */
  .dialog {
    position: absolute;
    top: 154px;
    right: 36px;
    width: 884px;
    background: #fff;
    color: #111;
    box-shadow: 0 2px 8px rgba(0, 0, 0, 0.5);
  }
  .dlg-title { display: flex; align-items: center; gap: 6px; height: 30px; padding-left: 9px; }
  .win-btns { display: flex; margin-left: auto; }
  .win-btns button { display: flex; align-items: center; justify-content: center; width: 46px; height: 28px; }
  .dlg-body { display: flex; padding: 15px 10px 0; }
  .pane { flex: 1; min-width: 0; }
  .pane h3 { padding-left: 4px; line-height: 18px; margin-bottom: 13px; }
  .splitter { width: 5px; margin-top: 31px; background: #f0f0f0; }
  .list {
    display: flex;
    flex-direction: column;
    height: 465px;
    padding: 1px 2px 1px 3px;
    box-sizing: border-box;
    border: 1px solid #7f9db9;
    overflow: hidden;
  }
  .list.files { border-color: #6f90ab #b9d3e6 #c9dbe8; }
  .list table { table-layout: fixed; border-collapse: separate; border-spacing: 0; width: 100%; }
  .files table { width: 560px; }
  .w-on { width: 61px; }
  .w-file { width: 200px; }
  .w-layer { width: 250px; }
  .list th {
    box-sizing: border-box;
    height: 20px;
    padding: 2px 0 0;
    font-weight: 400;
    line-height: 17px;
    border-right: 1px solid #dfe3ea;
    border-bottom: 1px solid #d0d4dc;
    background: linear-gradient(#fff, #f6f7f8);
  }
  .list th:last-child { border-right: 0; }
  .list td {
    box-sizing: border-box;
    height: 21px;
    padding: 2px 5px 0;
    border: solid transparent;
    border-width: 1px 0;
    line-height: 17px;
    color: #24305f;
    white-space: nowrap;
    overflow: hidden;
  }
  .list td:first-child { padding: 0 0 0 7px; }
  .clip { display: block; width: 188px; overflow: hidden; }
  .list .current td {
    border-color: #8fd0ee;
    background: linear-gradient(#e6f6fd, #cdedfb 50%, #a8def6);
  }
  .list input {
    display: block;
    appearance: none;
    width: 13px;
    height: 13px;
    margin: 0;
    border: 1px solid #6a6a6a;
    background: #fff;
  }
  .list input:checked {
    background: #fff url("data:image/svg+xml,%3Csvg xmlns='http://www.w3.org/2000/svg' viewBox='0 0 11 11'%3E%3Cpath fill='none' stroke='%23181818' stroke-width='2' d='M1.500 5.500l2.700 3L9.500 2'/%3E%3C/svg%3E") center / 11px no-repeat;
  }
  .hbar { display: flex; align-items: center; height: 17px; margin-top: auto; background: #f0f0f0; }
  .hbar .chev { margin: 0 3px; width: 8px; color: #a0a0a0; }
  .track { flex: 1; align-self: stretch; }
  .thumb { display: block; width: 75%; height: 100%; background: #cdcdcd; }

  .dlg-foot { display: flex; gap: 10px; padding: 16px 15px 14px 10px; }
  .dlg-foot button { width: 100px; height: 20px; border: 1px solid #707070; background: #dddddd; line-height: 18px; }
  .grow { flex: 1; }

  .pointer { position: absolute; top: 27px; left: 771px; }
</style>
